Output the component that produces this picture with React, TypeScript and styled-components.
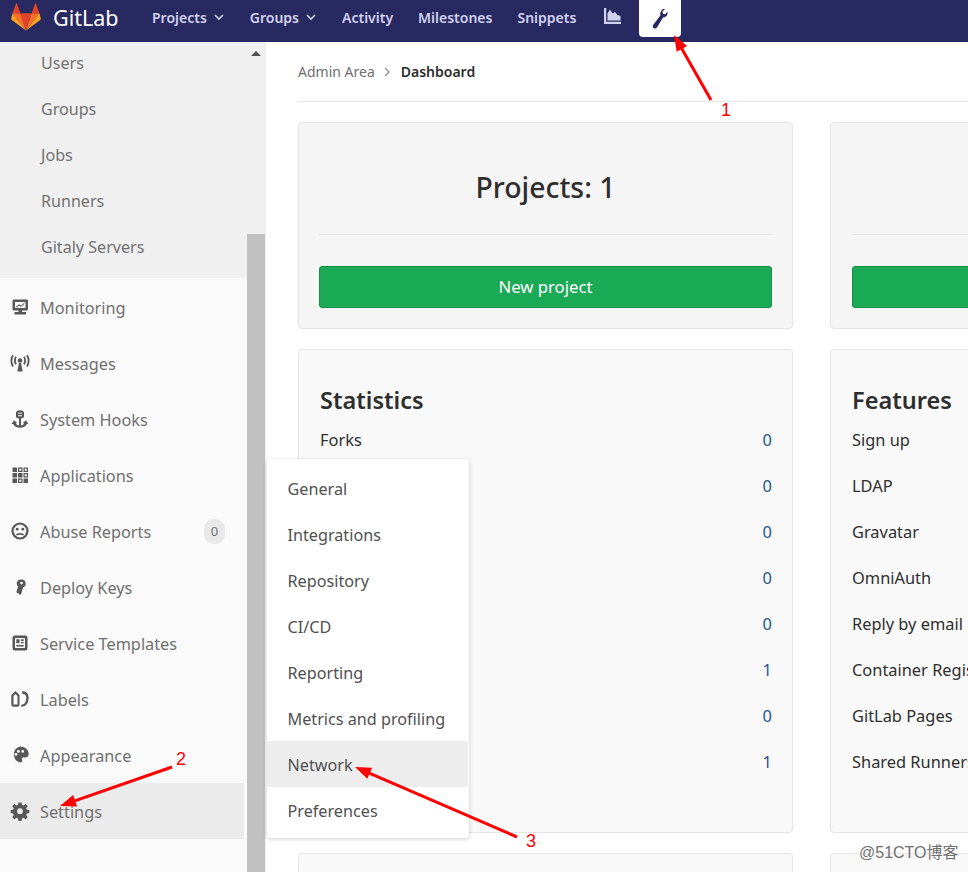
import React from 'react';
import styled, { createGlobalStyle } from 'styled-components';

const GlobalStyle = createGlobalStyle`
    html, body {
        margin: 0;
        padding: 0;
        background: #fff;
        overflow: hidden;
    }
    * {
        box-sizing: border-box;
    }
`;

const Page = styled.div`
    position: relative;
    width: 968px;
    height: 872px;
    overflow: hidden;
    font-family: 'Noto Sans', 'Open Sans', sans-serif;
    font-size: 16px;
    color: #2e2e2e;
`;

const TopBar = styled.header`
    display: flex;
    align-items: flex-start;
    height: 42px;
    background: #292961;
`;

const Brand = styled.div`
    display: flex;
    align-items: center;
    gap: 12px;
    width: 152px;
    height: 34px;
    padding-left: 11px;
    color: #fff;
    font-size: 21.5px;
`;

const NavLink = styled.div`
    display: flex;
    align-items: center;
    gap: 7px;
    height: 34px;
    margin-right: 25px;
    color: #d1d1f0;
    font-size: 14px;
    font-weight: 600;
`;

const Chevron = styled.svg`
    width: 10px;
    height: 7px;
    margin-right: 1px;
`;

const NavIcon = styled.div<{ $active?: boolean }>`
    display: flex;
    align-items: center;
    justify-content: center;
    width: 42px;
    height: 37px;
    margin-left: ${(p) => (p.$active ? '0' : '-10px')};
    margin-right: ${(p) => (p.$active ? '0' : '6px')};
    padding-bottom: ${(p) => (p.$active ? '0' : '5px')};
    border-radius: 0 0 4px 4px;
    background: ${(p) => (p.$active ? '#fff' : 'transparent')};
`;

const Body = styled.div`
    display: flex;
    height: 830px;
`;

const Sidebar = styled.aside`
    flex: none;
    width: 266px;
    display: flex;
`;

const SideColumn = styled.div`
    flex: none;
    width: 247px;
    background: #fafafa;
`;

const SubList = styled.ul`
    list-style: none;
    margin: 0;
    height: 236px;
    padding: 0 0 0 41px;
    background: #f0f0f0;
`;

const SubItem = styled.li`
    height: 46px;
    line-height: 42px;
    color: #707070;
    font-size: 16.1px;
`;

const SideItem = styled.div<{ $active?: boolean }>`
    display: flex;
    align-items: center;
    width: 244px;
    height: 56px;
    padding: 2px 19px 0 10px;
    color: #707070;
    font-size: 16.3px;
    background: ${(p) => (p.$active ? '#ebebeb' : 'transparent')};
    svg {
        flex: none;
        width: 20px;
        height: 20px;
        margin: -2px 10px 0 0;
        color: #575757;
    }
`;

const SideList = styled.div`
    padding-top: 1px;
`;

const Badge = styled.span`
    margin: -2px 0 0 auto;
    width: 21px;
    height: 25px;
    border-radius: 10px;
    background: #e8e8e8;
    color: #707070;
    font-size: 13px;
    line-height: 25px;
    text-align: center;
`;

const ScrollTrack = styled.div`
    position: relative;
    flex: none;
    width: 19px;
    background: #f0f0f0;
`;

const ScrollThumb = styled.div`
    margin-top: 192px;
    width: 18px;
    height: 638px;
    background: #c1c1c1;
`;

const ScrollUp = styled.div`
    position: absolute;
    top: 9px;
    left: 4px;
    width: 0;
    height: 0;
    border-left: 5px solid transparent;
    border-right: 5px solid transparent;
    border-bottom: 5px solid #505050;
`;

const Main = styled.main`
    flex: 1;
    min-width: 0;
    padding-left: 32px;
`;

const Crumbs = styled.nav`
    display: flex;
    align-items: center;
    gap: 8px;
    height: 60px;
    margin-bottom: 20px;
    border-bottom: 1px solid #e5e5e5;
    font-size: 14px;
    color: #707070;
    b {
        margin-left: 2px;
        color: #2e2e2e;
        font-weight: 600;
    }
`;

const CardGrid = styled.div`
    display: grid;
    grid-template-columns: 495px 495px;
    column-gap: 37px;
    row-gap: 20px;
`;

const Card = styled.section<{ $height: number }>`
    height: ${(p) => p.$height}px;
    border: 1px solid #e5e5e5;
    border-radius: 4px;
    background: #f9f9f9;
    overflow: hidden;
`;

const HeroCard = styled(Card)<{ $inset: number }>`
    padding: 0 20px 0 ${(p) => p.$inset}px;
    background: #f5f5f5;
`;

const HeroTitle = styled.h2`
    height: 112px;
    margin: 0;
    padding-top: 44px;
    border-bottom: 1px solid #e5e5e5;
    font-size: 28.4px;
    line-height: 40px;
    font-weight: 500;
    text-align: center;
`;

const GreenButton = styled.div`
    margin-top: 31px;
    height: 42px;
    border: 1px solid #168f48;
    border-radius: 3px;
    background: #1aaa55;
    color: #fff;
    font-size: 16.7px;
    line-height: 40px;
    text-align: center;
`;

const InfoTitle = styled.h3`
    margin: 0 0 9px;
    padding: 30px 20px 0 21px;
    font-size: 23.5px;
    line-height: 40px;
    font-weight: 600;
`;

const InfoRow = styled.div`
    display: flex;
    justify-content: space-between;
    height: 46px;
    padding: 0 20px 0 21px;
    line-height: 22px;
    font-size: 16.4px;
    white-space: nowrap;
`;

const InfoValue = styled.span`
    margin-left: auto;
    color: #26568c;
`;

const Flyout = styled.div`
    position: absolute;
    left: 267px;
    top: 459px;
    width: 202px;
    height: 379px;
    padding: 6px 1px 0 0;
    background: #fff;
    border-radius: 3px;
    box-shadow: 0 1px 4px rgba(0, 0, 0, 0.2);
`;

const FlyoutItem = styled.div<{ $active?: boolean }>`
    height: 46px;
    padding: 1px 0 0 20.5px;
    line-height: 46px;
    font-size: 16.2px;
    color: #505050;
    background: ${(p) => (p.$active ? '#ededed' : 'transparent')};
`;

const Annotations = styled.svg`
    position: absolute;
    left: 0;
    top: 0;
    pointer-events: none;
`;

const MarkNumber = styled.span<{ $x: number; $y: number }>`
    position: absolute;
    left: ${(p) => p.$x}px;
    top: ${(p) => p.$y}px;
    color: #f00;
    font-family: 'Liberation Sans', sans-serif;
    font-size: 18px;
    line-height: 20px;
`;

const Watermark = styled.span`
    position: absolute;
    left: 859px;
    top: 843px;
    color: #6e6e6e;
    font-family: 'Liberation Sans', 'Noto Sans CJK SC', sans-serif;
    font-size: 16px;
    line-height: 20px;
    white-space: nowrap;
    text-shadow: 0 0 2px #fff, 0 0 2px #fff;
`;

const NavChevron = () => (
    <Chevron viewBox="0 0 10 7" fill="none" stroke="currentColor" strokeWidth="1.6">
        <path d="M1 1l4 4 4-4" />
    </Chevron>
);

const Logo = () => (
    <svg width="30" height="28" viewBox="0 0 32 30">
        <path d="M16 29.5 22 11H10z" fill="#e24329" />
        <path d="M16 29.5 10 11H1.6z" fill="#fc6d26" />
        <path d="M1.6 11 .2 16.400c-.2.700 0 1.300.6 1.700L16 29.500z" fill="#fca326" />
        <path d="M1.600 11H10L6.400 1c-.2-.500-1-.500-1.200 0z" fill="#e24329" />
        <path d="M16 29.500 22 11h8.400z" fill="#fc6d26" />
        <path d="M30.400 11l1.400 5.400c.2.700 0 1.300-.6 1.700L16 29.500z" fill="#fca326" />
        <path d="M30.400 11H22l3.600-10c.2-.500 1-.500 1.200 0z" fill="#e24329" />
    </svg>
);

const icons: Record<string, React.ReactNode> = {
    monitoring: (
        <path d="M4 2.500h12.500c.9 0 1.500.6 1.500 1.500v8c0 .9-.6 1.500-1.500 1.500H12v1.500h4V17.500H4.500V15h4v-1.500H4c-.9 0-1.500-.6-1.500-1.500V4c0-.9.6-1.500 1.500-1.500zM5 5v6h10.500V5zm1 4.800 3-2.600 2 1.400 3-2.600.6.700-3.600 3.100-2-1.400-2.400 2.100z" fillRule="evenodd" />
    ),
    messages: (
        <>
            <circle cx="10" cy="7.500" r="2.300" />
            <path d="M9 10h2l1.700 8.500H7.300z" />
            <path d="M6 3.800C4.800 5.800 4.800 9 6 11.200M14 3.800c1.200 2 1.200 5.200 0 7.400M3 2.200C1 5.500 1 10 3 13.500M17 2.200c2 3.300 2 7.800 0 11.300" fill="none" stroke="currentColor" strokeWidth="1.800" />
        </>
    ),
    hooks: (
        <>
            <path d="M10 1.300c2.300 0 4 1 4 2.500v3.400c0 1.300-1.200 2.200-3 2.400v1h-2v-1c-1.800-.2-3-1.100-3-2.400V3.800c0-1.500 1.700-2.500 4-2.500zM8 3.700v1.100h4V3.700zm0 2.500v1.100h4V6.200z" fillRule="evenodd" />
            <path d="M9 10h2v6.300c1.500-.2 2.600-.8 3.200-1.900l-1.300-.5 3-2.700 2.600 3.700-1.700.1c-1 2.500-3.600 3.800-6.800 3.800s-5.800-1.300-6.800-3.800l-1.700-.1 2.600-3.700 3 2.700-1.300.5c.6 1.100 1.700 1.700 3.200 1.900z" />
        </>
    ),
    applications: (
        <>
            <path d="M2.500 2.500h4.500v4.500H2.500zM8 2.500h4.500v4.500H8zM13.500 2.500H18v4.500h-4.500zM2.500 8h4.500v4.500H2.500zM8 8h4.500v4.500H8zM13.500 8H18v4.500h-4.500zM2.500 13.500h4.500V18H2.500zM8 13.500h4.500V18H8zM13.500 13.500H18V18h-4.500z" />
            <path d="M9.200 3.700h2.100v2.100H9.200zM14.700 3.700h2.100v2.100h-2.100zM14.700 9.200h2.100v2.100h-2.100zM9.200 14.700h2.100v2.100H9.200z" fill="#fafafa" />
        </>
    ),
    abuse: (
        <>
            <circle cx="10" cy="10" r="7.500" fill="none" stroke="currentColor" strokeWidth="2.200" />
            <circle cx="7.200" cy="8.200" r="1.400" />
            <circle cx="12.800" cy="8.200" r="1.400" />
            <path d="M6.500 14c1-1.600 6-1.600 7 0" fill="none" stroke="currentColor" strokeWidth="1.700" />
        </>
    ),
    keys: (
        <path d="M11.500 2.500a4 4 0 0 1 1.700 7.700L11 17.500H8.800l-.4-1.500H6.800l-.3-1.700L8.200 9.500a4 4 0 0 1 3.300-7zm0 2.200a1.400 1.400 0 1 0 0 2.800 1.400 1.400 0 0 0 0-2.800z" fillRule="evenodd" />
    ),
    templates: (
        <path d="M5 2.500h10A2.500 2.500 0 0 1 17.500 5v10a2.500 2.500 0 0 1-2.500 2.500H5A2.500 2.500 0 0 1 2.500 15V5A2.500 2.500 0 0 1 5 2.500zm.5 2.500A.5.5 0 0 0 5 5.500v9c0 .3.200.5.500.5h9c.3 0 .5-.2.500-.5v-9a.5.5 0 0 0-.5-.5zM6.300 6.300h3.200v4H6.300zm4.700 0h2.700v1.700H11zm0 2.600h2.700v1.400H11zM6.300 12h7.400v1.500H6.300z" fillRule="evenodd" />
    ),
    labels: (
        <path d="M5.500 2 9.500 6v9.500a2.200 2.200 0 0 1-2.200 2.200H3.500a2.200 2.200 0 0 1-2.200-2.200V6zM3.500 7v8.500h4V7L5.500 5.100zM12 2.500c2.800-.8 5 .8 6 3 1.200 3 .6 7.800-2 10.500-1.200 1.200-3 1.800-5 1.700l.6-2.200c1.200.1 2.200-.1 2.900-.9 1.700-1.800 2.200-5.500 1.500-7.500-.6-1.400-2-2.300-3.500-1.900z" fillRule="evenodd" />
    ),
    appearance: (
        <path d="M10 1.500c4.800 0 8.700 3.300 8.700 7.500 0 2.200-1.500 3.500-3.700 3.500h-2.200c-.9 0-1.300.8-.9 1.500.5.900.6 1.700.2 2.400-.4.800-1.200 1.200-2.100 1.100A8.300 8.300 0 0 1 10 1.500zM6 8a1.400 1.400 0 1 0 0 2.800A1.400 1.400 0 0 0 6 8zm2.400-3A1.400 1.400 0 1 0 8.400 7.800 1.400 1.400 0 0 0 8.400 5zm4.300 0a1.400 1.400 0 1 0 0 2.800 1.400 1.400 0 0 0 0-2.800z" fillRule="evenodd" />
    ),
    settings: (
        <path d="M8.500 1.500h3l.5 2.500 1.500.6L15.600 3 17.700 5.100l-1.500 2.100.6 1.500 2.500.4v3l-2.500.5-.6 1.500 1.500 2.100-2.100 2.100-2.100-1.500-1.500.6-.5 2.500h-3l-.5-2.500-1.500-.6-2.100 1.500-2.100-2.100 1.500-2.100-.6-1.500-2.500-.5v-3l2.500-.4.6-1.500-1.500-2.100L4.400 3l2.100 1.600L8 4zM10 7.300a2.900 2.900 0 1 0 0 5.800 2.900 2.900 0 0 0 0-5.800z" fillRule="evenodd" />
    ),
};

const SideIcon = ({ name }: { name: string }) => (
    <svg viewBox="0 0 20 20" fill="currentColor">
        {icons[name]}
    </svg>
);

const subItems = ['Users', 'Groups', 'Jobs', 'Runners', 'Gitaly Servers'];

const sideItems = [
    { icon: 'monitoring', label: 'Monitoring' },
    { icon: 'messages', label: 'Messages' },
    { icon: 'hooks', label: 'System Hooks' },
    { icon: 'applications', label: 'Applications' },
    { icon: 'abuse', label: 'Abuse Reports', badge: '0' },
    { icon: 'keys', label: 'Deploy Keys' },
    { icon: 'templates', label: 'Service Templates' },
    { icon: 'labels', label: 'Labels' },
    { icon: 'appearance', label: 'Appearance' },
    { icon: 'settings', label: 'Settings', active: true },
];

const flyoutItems = [
    'General',
    'Integrations',
    'Repository',
    'CI/CD',
    'Reporting',
    'Metrics and profiling',
    'Network',
    'Preferences',
];

// the flyout covers every label below Forks
const stats = [
    ['Forks', '0'],
    ['', '0'],
    ['', '0'],
    ['', '0'],
    ['', '0'],
    ['', '1'],
    ['', '0'],
    ['', '1'],
];

const features = [
    'Sign up',
    'LDAP',
    'Gravatar',
    'OmniAuth',
    'Reply by email',
    'Container Registry',
    'GitLab Pages',
    'Shared Runners',
];

const Arrow = ({ x1, y1, x2, y2 }: { x1: number; y1: number; x2: number; y2: number }) => {
    const angle = Math.atan2(y2 - y1, x2 - x1);
    const point = (len: number, spread: number) =>
        `${x2 - len * Math.cos(angle) + spread * Math.sin(angle)},${y2 - len * Math.sin(angle) - spread * Math.cos(angle)}`;
    return (
        <>
            <line x1={x1} y1={y1} x2={x2 - 8 * Math.cos(angle)} y2={y2 - 8 * Math.sin(angle)} stroke="#f00" strokeWidth="3" />
            <polygon points={`${x2},${y2} ${point(16, 6)} ${point(16, -6)}`} fill="#f00" />
        </>
    );
};

export default function App() {
    return (
        <Page>
            <GlobalStyle />
            <TopBar>
                <Brand>
                    <Logo />
                    GitLab
                </Brand>
                <NavLink>
                    Projects <NavChevron />
                </NavLink>
                <NavLink>
                    Groups <NavChevron />
                </NavLink>
                <NavLink>Activity</NavLink>
                <NavLink>Milestones</NavLink>
                <NavLink>Snippets</NavLink>
                <NavIcon>
                    <svg width="17" height="16" viewBox="0 0 17 16" fill="#d1d1f0">
                        <path d="M0 0h2.200v13.800H17V16H0zM3.500 12.500V5.500L6 1.500l2.500 4 2.500-1.500 2.500 3 3 1v4.500z" />
                    </svg>
                </NavIcon>
                <NavIcon $active>
                    <svg width="16" height="20" viewBox="0 0 16 20" fill="#292961">
                        <path d="M10.500.3 8.600 3c-.6 1-.6 2.300-.1 3.300L1.300 15.800c-.9 1.200-.7 2.700.4 3.400 1.100.7 2.500.4 3.300-.7L11 8.500c1.800 0 3.500-1 4.200-2.700.4-.9.500-1.900.2-2.800l-2.400 2.300-2.100-.6-.4-2.100L13.100.1C12.300-.1 11.300 0 10.500.3z" />
                    </svg>
                </NavIcon>
            </TopBar>
            <Body>
                <Sidebar>
                    <SideColumn>
                        <SubList>
                            {subItems.map((item) => (
                                <SubItem key={item}>{item}</SubItem>
                            ))}
                        </SubList>
                        <SideList>
                            {sideItems.map((item) => (
                                <SideItem key={item.label} $active={item.active}>
                                    <SideIcon name={item.icon} />
                                    {item.label}
                                    {item.badge && <Badge>{item.badge}</Badge>}
                                </SideItem>
                            ))}
                        </SideList>
                    </SideColumn>
                    <ScrollTrack>
                        <ScrollUp />
                        <ScrollThumb />
                    </ScrollTrack>
                </Sidebar>
                <Main>
                    <Crumbs>
                        Admin Area
                        <svg width="8" height="10" viewBox="0 0 8 10" fill="none" stroke="#8c8c8c" strokeWidth="1.200">
                            <path d="M2 1l4 4-4 4" />
                        </svg>
                        <b>Dashboard</b>
                    </Crumbs>
                    <CardGrid>
                        <HeroCard $height={207} $inset={20}>
                            <HeroTitle>Projects: 1</HeroTitle>
                            <GreenButton>New project</GreenButton>
                        </HeroCard>
                        <HeroCard $height={207} $inset={21}>
                            <HeroTitle />
                            <GreenButton />
                        </HeroCard>
                        <Card $height={484}>
                            <InfoTitle>Statistics</InfoTitle>
                            {stats.map(([label, value], index) => (
                                <InfoRow key={index}>
                                    {label}
                                    <InfoValue>{value}</InfoValue>
                                </InfoRow>
                            ))}
                        </Card>
                        <Card $height={484}>
                            <InfoTitle>Features</InfoTitle>
                            {features.map((label) => (
                                <InfoRow key={label}>{label}</InfoRow>
                            ))}
                        </Card>
                        <Card $height={60} />
                        <Card $height={60} />
                    </CardGrid>
                </Main>
            </Body>
            <Flyout>
                {flyoutItems.map((item) => (
                    <FlyoutItem key={item} $active={item === 'Network'}>
                        {item}
                    </FlyoutItem>
                ))}
            </Flyout>
            <Annotations width="968" height="872">
                <Arrow x1={711} y1={100} x2={674} y2={35} />
                <Arrow x1={172} y1={767} x2={60} y2={806} />
                <Arrow x1={517} y1={837} x2={355} y2={767} />
            </Annotations>
            <MarkNumber $x={721} $y={100}>1</MarkNumber>
            <MarkNumber $x={176} $y={749}>2</MarkNumber>
            <MarkNumber $x={526} $y={831}>3</MarkNumber>
            <Watermark>@51CTO博客</Watermark>
        </Page>
    );
}
